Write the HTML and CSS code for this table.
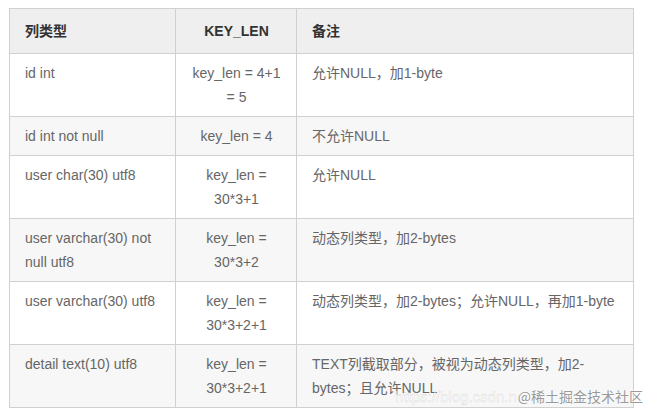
FILE: index.html
```html
<!DOCTYPE html>
<html lang="zh">
<head>
<meta charset="utf-8">
<link rel="stylesheet" href="styles.css">
</head>
<body>
<div class="wrap">
<table class="tbl">
  <colgroup>
    <col class="c1"><col class="c2"><col class="c3">
  </colgroup>
  <thead>
    <tr><th class="l">列类型</th><th class="c">KEY_LEN</th><th class="l">备注</th></tr>
  </thead>
  <tbody>
    <tr><td>id int</td><td class="c">key_len = 4+1 = 5</td><td>允许NULL，加1-byte</td></tr>
    <tr class="alt"><td>id int not null</td><td class="c">key_len = 4</td><td>不允许NULL</td></tr>
    <tr><td>user char(30) utf8</td><td class="c">key_len = 30*3+1</td><td>允许NULL</td></tr>
    <tr class="alt"><td>user varchar(30) not null utf8</td><td class="c">key_len = 30*3+2</td><td>动态列类型，加2-bytes</td></tr>
    <tr><td>user varchar(30) utf8</td><td class="c">key_len = 30*3+2+1</td><td>动态列类型，加2-bytes；允许NULL，再加1-byte</td></tr>
    <tr class="alt"><td>detail text(10) utf8</td><td class="c">key_len = 30*3+2+1</td><td>TEXT列截取部分，被视为动态列类型，加2-bytes；且允许NULL</td></tr>
  </tbody>
</table>
<div class="wm"><span class="wm-url">https://blog.csdn.n</span><span class="wm-tag">@稀土掘金技术社区</span></div>
</div>
</body>
</html>
```
FILE: styles.css
```css
html, body { background: #fff; }
body {
  margin: 8px 0 0 9px;
  font-family: "Liberation Sans", Arial, "Noto Sans CJK SC", sans-serif;
  font-size: 14px;
  color: #666;
}
.wrap { position: relative; width: 624px; }
.tbl {
  border-collapse: collapse;
  width: 624px;
  table-layout: fixed;
}
.c1 { width: 166px; }
.c2 { width: 121px; }
.c3 { width: 337px; }
.tbl th, .tbl td {
  border: 1px solid #d0d0d0;
  padding: 7px 14px 7px 15px;
  line-height: 24px;
  vertical-align: top;
  text-align: left;
}
.tbl th {
  background: #efefef;
  color: #333;
  font-weight: bold;
  padding-top: 10px;
  padding-bottom: 10px;
}
.tbl td.c, .tbl th.c { text-align: center; }
.tbl tr.alt td { background: #f7f7f7; }
.wm {
  position: absolute;
  right: -10px;
  bottom: 1px;
  display: flex;
  align-items: center;
  white-space: nowrap;
  height: 22px;
}
.wm-url {
  font-size: 15px;
  color: rgba(255,255,255,0.7);
  -webkit-text-stroke: 0.4px rgba(150,150,150,0.35);
  margin-right: 1px;
}
.wm-tag {
  font-size: 14px;
  color: #9a9a9a;
  text-shadow: 0 0 2px #fff, 0 0 2px #fff;
  font-family: "Noto Sans CJK SC", sans-serif;
}
```
